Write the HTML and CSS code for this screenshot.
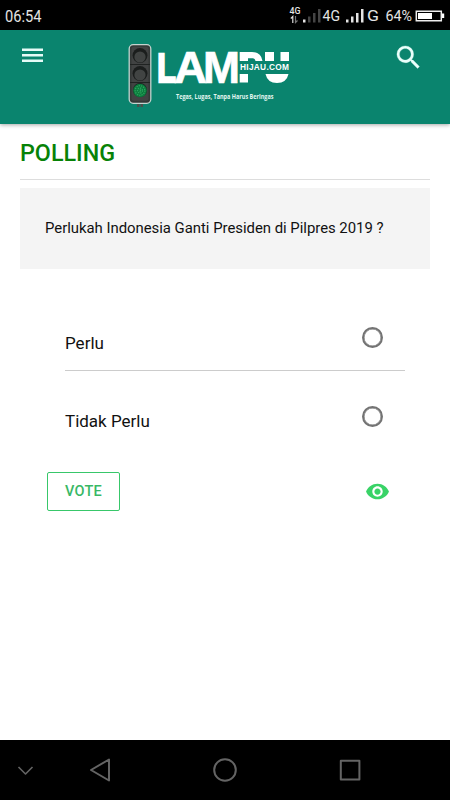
FILE: index.html
```html
<!DOCTYPE html>
<html lang="id">
<head>
<meta charset="utf-8">
<title>Lampu Hijau - Polling</title>
<link rel="stylesheet" href="styles.css">
</head>
<body>
<div class="screen">
  <div class="status">
    <svg width="450" height="30" viewBox="0 0 450 30">
      <g fill="#e4e4e4">
        <text x="5" y="21.5" font-size="16" textLength="36.5" lengthAdjust="spacingAndGlyphs">06:54</text>
        <text x="289.500" y="14" font-size="8.500" font-weight="500" textLength="11" lengthAdjust="spacingAndGlyphs">4G</text>
        <text x="322.500" y="21" font-size="15" textLength="17.500" lengthAdjust="spacingAndGlyphs">4G</text>
        <text x="367" y="21" font-size="15" textLength="12" lengthAdjust="spacingAndGlyphs">G</text>
        <text x="385.500" y="21" font-size="14.500" textLength="26.500" lengthAdjust="spacingAndGlyphs">64%</text>
        <path d="M303 19.500h2.500v3H303zM346 19.500h2.500v3H346zM351 16.500h2.500v6H351zM356 13h2.500v9.500H356zM361 9h2.500v13.500H361z"/>
      </g>
      <path fill="#444" d="M308 16.500h2.500v6H308zM313 13h2.500v9.500H313zM318 9h2.500v13.500H318z"/>
      <path fill="none" stroke="#ddd" stroke-width="1.200" d="M292.800 23v-6.500l-2 2"/>
      <path fill="none" stroke="#777" stroke-width="1.200" d="M295.500 16v6.500l2-2"/>
      <path fill="none" stroke="#eee" stroke-width="1.500" d="M416.300 11.200h25v9.500h-25z"/>
      <path fill="#fff" d="M418 13h14v6h-14zM442 13.500h2.200v4.500H442z"/>
    </svg>
  </div>

  <header class="header">
    <svg class="menu" width="21" height="15" viewBox="0 0 21 15"><path fill="#e6fbf7" d="M0 .5h21V3H0zM0 6h21v2.500H0zM0 11.500h21V14H0z"/></svg>
    <svg class="logo" width="170" height="70" viewBox="125 40 170 70">
      <path fill="#4a4f4c" d="M137 103h2.500v4H137zM140.500 103h2.500v4h-2.500z"/>
      <rect x="129.200" y="44.700" width="21.600" height="58.600" rx="4" fill="#343837" stroke="#c3d3ce" stroke-width="1.300"/>
      <rect x="131.500" y="46.800" width="17" height="54" rx="2.500" fill="#414343"/>
      <path stroke="#202322" stroke-width="1.200" d="M130 64.500h20M130 82.500h20"/>
      <g fill="#1b1e1d"><circle cx="140" cy="55.500" r="7.500"/><circle cx="140" cy="73.500" r="7.500"/><circle cx="140" cy="90" r="7"/></g>
      <g fill="#414443"><circle cx="140" cy="57" r="5.600"/><circle cx="140" cy="75" r="5.600"/></g>
      <circle cx="140" cy="90.500" r="6.800" fill="#0b7a3c"/>
      <g fill="none" stroke="#2aa35e" stroke-width="1.300" stroke-dasharray="1.300 1"><circle cx="140" cy="90.500" r="4.800"/><circle cx="140" cy="90.500" r="2.500"/><circle cx="140" cy="90.500" r=".6"/></g>
      <g class="brand">
        <text class="brand-heavy" x="157.200" y="81.700" textLength="18.500" lengthAdjust="spacingAndGlyphs">L</text>
        <text x="174" y="82.500" textLength="33" lengthAdjust="spacingAndGlyphs">A</text>
        <text x="203" y="82.500" textLength="37" lengthAdjust="spacingAndGlyphs">M</text>
      </g>
      <path fill="#fff" d="M239.700 52H252q9 0 10.500 9h-7q-.5-2.700-2.500-2.700h-5V61h-8.300zM265 52h9v9h-9zM280.500 52h8.500v9h-8.500zM239.700 74h8.300v8.500h-8.300zM265.500 74h23q-2 9-11.500 9t-11.500-9z"/>
      <text class="domain" x="240" y="70" textLength="49" lengthAdjust="spacing">HIJAU.COM</text>
      <text class="tagline" x="176" y="99" textLength="97.500" lengthAdjust="spacingAndGlyphs">Tegas, Lugas, Tanpa Harus Beringas</text>
    </svg>
    <svg class="search" width="31" height="31" viewBox="0 0 24 24"><path fill="#eafffb" stroke="#eafffb" stroke-width=".2" d="M15.500 14h-.79l-.28-.27A6.471 6.471 0 0 0 16 9.500 6.500 6.500 0 1 0 9.500 16c1.610 0 3.090-.59 4.230-1.570l.27.28v.79l5 4.990L20.490 19l-4.990-5zm-6 0C7.010 14 5 11.990 5 9.500S7.010 5 9.500 5 14 7.010 14 9.500 11.990 14 9.500 14z"/></svg>
  </header>

  <main class="content">
    <h1>POLLING</h1>
    <p class="question">Perlukah Indonesia Ganti Presiden di Pilpres 2019 ?</p>
    <div class="options">
      <label class="option"><span>Perlu</span><i class="radio"></i></label>
      <label class="option"><span>Tidak Perlu</span><i class="radio"></i></label>
    </div>
    <div class="actions">
      <button class="vote">VOTE</button>
      <svg width="25" height="25" viewBox="0 0 24 24"><path fill="#39d367" d="M12 4.500C7 4.500 2.730 7.610 1 12c1.730 4.390 6 7.500 11 7.500s9.270-3.110 11-7.500c-1.730-4.390-6-7.500-11-7.500zM12 17c-2.760 0-5-2.240-5-5s2.240-5 5-5 5 2.240 5 5-2.240 5-5 5zm0-8c-1.660 0-3 1.340-3 3s1.340 3 3 3 3-1.340 3-3-1.340-3-3-3z"/></svg>
    </div>
  </main>

  <nav class="navbar">
    <svg width="450" height="60" viewBox="0 0 450 60" fill="none" stroke="#646464" stroke-width="2" stroke-linejoin="round">
      <path stroke-width="1.600" d="M18.500 27l7 7 7-7"/>
      <path d="M109 19.500v21L91 30z"/>
      <circle cx="225" cy="30" r="10.800"/>
      <path d="M340.800 20.800h18.600v18.600h-18.600z"/>
    </svg>
  </nav>
</div>
</body>
</html>
```

FILE: styles.css
```css
* { box-sizing: border-box; }

body {
  margin: 0;
  background: #fff;
  font-family: Roboto, "Liberation Sans", sans-serif;
  color: #111;
}

svg { display: block; flex: none; }

.screen {
  display: flex;
  flex-direction: column;
  width: 450px;
  height: 800px;
  overflow: hidden;
}

.status { height: 30px; background: #000; }

.header {
  display: flex;
  align-items: flex-start;
  justify-content: space-between;
  height: 94px;
  padding: 10px 26px 0 22px;
  background: #0a846e;
  box-shadow: 0 1px 4px rgba(0, 0, 0, .35);
}

.menu { margin-top: 8px; }
.logo { margin-left: 82px; margin-right: auto; }
.search { margin-top: 2px; }

.brand {
  font: 700 43.500px "Liberation Sans", sans-serif;
  fill: #fff;
  stroke: #fff;
  stroke-width: .7px;
}

.brand-heavy {
  font-size: 41.500px;
  stroke-width: 2.600px;
}

.domain {
  font: 700 8.300px "Liberation Sans", sans-serif;
  fill: #fff;
}

.tagline {
  font: 700 7px "Open Sans", sans-serif;
  fill: #e4f7f1;
}

.content {
  flex: 1;
  padding: 0 20px;
}

h1 {
  height: 56px;
  margin: 0;
  padding-top: 15px;
  border-bottom: 1px solid #ddd;
  color: #078207;
  font-size: 23.300px;
  font-weight: 500;
  line-height: 28px;
}

.question {
  display: flex;
  align-items: center;
  height: 81px;
  margin: 8px 0 0;
  padding: 0 25px 2px;
  background: #f4f4f4;
  font-size: 14.900px;
  letter-spacing: -.02px;
  white-space: nowrap;
}

.options {
  margin: 23px 25px 0 45px;
}

.option {
  display: flex;
  align-items: flex-start;
  justify-content: space-between;
  height: 78px;
  padding: 35px 22px 0 0;
  font-size: 17px;
  line-height: 32px;
}

.option + .option {
  height: 79px;
  border-top: 1px solid #ccc;
  line-height: 31px;
}

.radio {
  width: 21px;
  height: 21px;
  border: 2px solid #737373;
  border-radius: 50%;
  box-shadow: inset 0 0 0 .5px #737373;
}

.actions {
  display: flex;
  justify-content: space-between;
  align-items: center;
  margin: 23px 40px 0 27px;
}

.vote {
  width: 73px;
  height: 39px;
  padding: 0 0 1px;
  border: 1px solid #38c76a;
  border-radius: 2px;
  background: #fff;
  color: #38b865;
  font: 500 14.500px Roboto, sans-serif;
  letter-spacing: .3px;
}

.navbar { height: 60px; background: #000; }
```
